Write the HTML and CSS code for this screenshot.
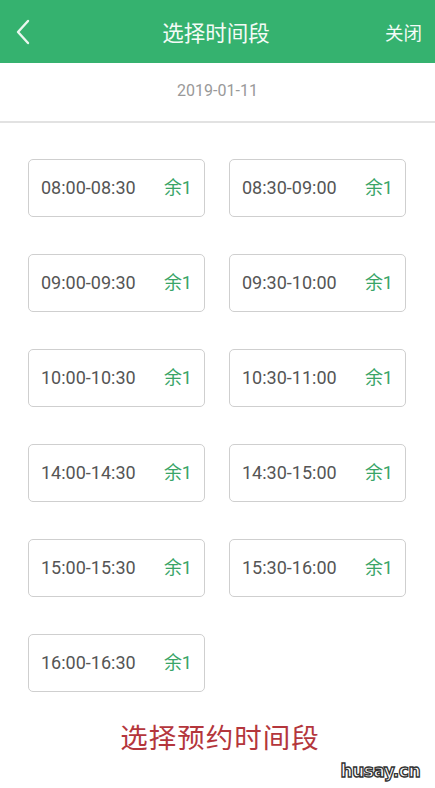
FILE: index.html
```html
<!DOCTYPE html>
<html lang="zh-CN">
<head>
    <meta charset="UTF-8">
    <meta name="viewport" content="width=device-width, initial-scale=1.0">
    <title>选择时间段</title>
    <link rel="stylesheet" href="styles.css">
</head>
<body>

    <div class="header">
        <svg class="back" width="16" height="26" viewBox="0 0 16 26">
            <path d="M13 2 L3 13 L13 24" fill="none" stroke="#eaf7ef" stroke-width="2.4" stroke-linecap="round" stroke-linejoin="round"/>
        </svg>
        <div class="title">选择时间段</div>
        <div class="close">关闭</div>
    </div>

    <div class="date">2019-01-11</div>

    <div class="slots">
        <div class="slot"><span class="time">08:00-08:30</span><span class="left">余1</span></div>
        <div class="slot"><span class="time">08:30-09:00</span><span class="left">余1</span></div>
        <div class="slot"><span class="time">09:00-09:30</span><span class="left">余1</span></div>
        <div class="slot"><span class="time">09:30-10:00</span><span class="left">余1</span></div>
        <div class="slot"><span class="time">10:00-10:30</span><span class="left">余1</span></div>
        <div class="slot"><span class="time">10:30-11:00</span><span class="left">余1</span></div>
        <div class="slot"><span class="time">14:00-14:30</span><span class="left">余1</span></div>
        <div class="slot"><span class="time">14:30-15:00</span><span class="left">余1</span></div>
        <div class="slot"><span class="time">15:00-15:30</span><span class="left">余1</span></div>
        <div class="slot"><span class="time">15:30-16:00</span><span class="left">余1</span></div>
        <div class="slot"><span class="time">16:00-16:30</span><span class="left">余1</span></div>
    </div>

    <div class="caption">选择预约时间段</div>

    <div class="watermark">husay.cn</div>

</body>
</html>
```

FILE: styles.css
```css
body {
    margin: 0;
    font-family: Roboto, "Noto Sans CJK SC", sans-serif;
    background: #fff;
    width: 435px;
    height: 788px;
    position: relative;
    overflow: hidden;
}

.header {
    height: 63px;
    background-color: #35b26f;
    display: flex;
    align-items: center;
    padding: 0 13px 0 15px;
    color: #f3fbf6;
}

.back {
    display: block;
    width: 16px;
    height: 26px;
}

.title {
    flex: 1;
    text-align: center;
    font-size: 21.5px;
    padding-left: 16px;
}

.close {
    font-size: 18.5px;
}

.date {
    height: 58px;
    line-height: 56px;
    text-align: center;
    color: #999;
    font-size: 16px;
    border-bottom: 2px solid #e2e2e2;
}

.slots {
    display: grid;
    grid-template-columns: 177px 177px;
    column-gap: 24px;
    row-gap: 37px;
    padding: 36px 0 0 28px;
}

.slot {
    height: 56px;
    border: 1px solid #cfcfcf;
    border-radius: 5px;
    display: flex;
    align-items: center;
    justify-content: space-between;
    padding: 0 12px 0 12px;
}

.time {
    color: #555;
    font-size: 18px;
    line-height: 1;
}

.left {
    color: #3aa567;
    font-size: 18px;
    line-height: 1;
}

.caption {
    margin-top: 24px;
    padding-left: 5px;
    text-align: center;
    color: #b4363c;
    font-size: 27.5px;
    letter-spacing: 1px;
}

.watermark {
    position: absolute;
    right: 15px;
    bottom: 7px;
    font-family: "DejaVu Sans", sans-serif;
    font-weight: bold;
    font-size: 17px;
    color: #fff;
    -webkit-text-stroke: 1.3px #333;
    letter-spacing: -0.5px;
}
```
